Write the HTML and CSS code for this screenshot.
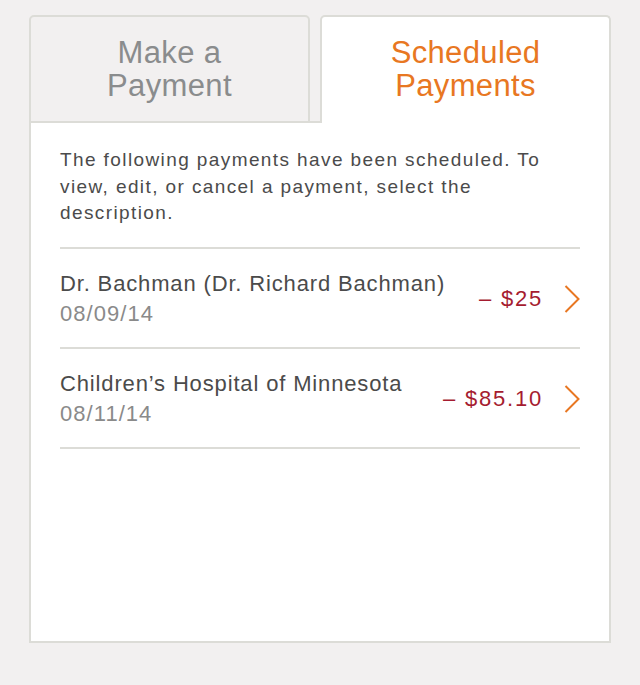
FILE: index.html
```html
<!DOCTYPE html>
<html>
<head>
<meta charset="utf-8">
<link rel="stylesheet" href="styles.css">
</head>
<body>
<div class="wrap">
  <div class="tabs">
    <div class="tab tab-inactive">Make a<br>Payment</div>
    <div class="tab-gap"></div>
    <div class="tab tab-active">Scheduled<br>Payments</div>
  </div>
  <div class="panel">
    <p class="intro">The following payments have been scheduled. To view, edit, or cancel a payment, select the description.</p>
    <div class="list">
      <div class="row">
        <div class="info">
          <div class="title">Dr. Bachman (Dr. Richard Bachman)</div>
          <div class="date">08/09/14</div>
        </div>
        <div class="amount">– $25</div>
        <svg class="chev" width="16" height="28" viewBox="0 0 16 28"><path d="M1.5 1 L14.5 14 L1.5 27" fill="none" stroke="#e87722" stroke-width="2"/></svg>
      </div>
      <div class="row">
        <div class="info">
          <div class="title">Children’s Hospital of Minnesota</div>
          <div class="date">08/11/14</div>
        </div>
        <div class="amount">– $85.10</div>
        <svg class="chev" width="16" height="28" viewBox="0 0 16 28"><path d="M1.5 1 L14.5 14 L1.5 27" fill="none" stroke="#e87722" stroke-width="2"/></svg>
      </div>
    </div>
  </div>
</div>
</body>
</html>
```
FILE: styles.css
```css
html, body {
  margin: 0;
  padding: 0;
  background: #f2f0f0;
  font-family: "Liberation Sans", Arial, sans-serif;
}
.wrap {
  width: 582px;
  margin-left: 29px;
  padding-top: 15px;
}
.tabs {
  display: flex;
  align-items: flex-end;
}
.tab {
  box-sizing: border-box;
  height: 108px;
  border: 2px solid #dcdcd7;
  border-radius: 5px 5px 0 0;
  text-align: center;
  font-size: 31px;
  line-height: 33px;
  letter-spacing: 0.35px;
  padding-top: 19px;
}
.tab-inactive {
  width: 281px;
  background: #f2f0f0;
  color: #8a8c8d;
  border-bottom-width: 2px;
}
.tab-gap {
  width: 10px;
  height: 0;
  border-bottom: 2px solid #dcdcd7;
}
.tab-active {
  width: 291px;
  background: #fff;
  color: #e87722;
  border-bottom: none;
}
.panel {
  box-sizing: border-box;
  height: 520px;
  background: #fff;
  border: 2px solid #dcdcd7;
  border-top: none;
  padding: 24px 29px 0;
}
.intro {
  margin: 0 0 20px;
  font-size: 19px;
  line-height: 26.5px;
  letter-spacing: 1.4px;
  color: #4b4b4b;
}
.list {
  border-top: 2px solid #dcdcd7;
}
.row {
  display: flex;
  align-items: center;
  padding: 20px 0 18px;
  border-bottom: 2px solid #dcdcd7;
}
.info {
  flex: 1;
  font-size: 22px;
  line-height: 30px;
  letter-spacing: 0.85px;
}
.title {
  color: #4b4b4b;
}
.date {
  color: #8a8a8a;
  letter-spacing: 1.05px;
}
.amount {
  font-size: 22px;
  letter-spacing: 1.8px;
  color: #a51c30;
  margin-right: 21px;
}
.chev {
  display: block;
}
```
